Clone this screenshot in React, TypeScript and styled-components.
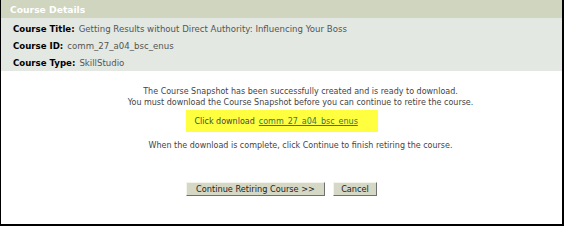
import React from "react";
import styled, { createGlobalStyle } from "styled-components";

const GlobalStyle = createGlobalStyle`
  html, body {
    margin: 0;
    padding: 0;
    background: #ffffff;
  }
  * {
    box-sizing: border-box;
  }
`;

const Frame = styled.div`
  width: 564px;
  height: 226px;
  border-left: 1px solid #000;
  border-right: 2px solid #000;
  border-bottom: 2px solid #000;
  background: #ffffff;
  font-family: "DejaVu Sans", Verdana, sans-serif;
  font-size: 8px;
  display: flex;
  flex-direction: column;
`;

const Header = styled.div`
  height: 18px;
  background: #cfd5be;
  color: #ffffff;
  font-size: 9.2px;
  font-weight: bold;
  padding-left: 9px;
  display: flex;
  align-items: center;
`;

const InfoPanel = styled.div`
  height: 53px;
  background: #e3e8e2;
  padding: 2px 0 0 12px;
  font-size: 8.6px;
  display: flex;
  flex-direction: column;
`;

const InfoRow = styled.div`
  height: 17px;
  display: flex;
  align-items: center;
  gap: 4px;
`;

const Label = styled.span`
  font-weight: bold;
  color: #000;
`;

const Value = styled.span`
  color: #555;
`;

const Body = styled.div`
  flex: 1;
  display: flex;
  flex-direction: column;
  align-items: center;
  padding-top: 15px;
  color: #444;
`;

const Message = styled.p<{ $top?: number }>`
  margin: ${(p) => p.$top ?? 0}px 0 0;
  padding-left: 38px;
  line-height: 11px;
  text-align: center;
  white-space: nowrap;
`;

const Highlight = styled.div`
  margin-top: 2px;
  height: 22px;
  width: 192px;
  padding-left: 9px;
  background: #ffff40;
  color: #444;
  display: flex;
  align-items: center;
  gap: 4px;
`;

const DownloadLink = styled.a`
  color: #2b7a52;
  text-decoration: underline;
  cursor: pointer;
`;

const Actions = styled.div`
  margin-top: 31px;
  display: flex;
  gap: 8px;
`;

const Button = styled.button<{ $width: number }>`
  width: ${(p) => p.$width}px;
  height: 14px;
  padding: 0;
  font-family: inherit;
  font-size: 8.2px;
  color: #222;
  background: #d6d8c6;
  border: 1px solid;
  border-color: #f4f4ec #707070 #707070 #f4f4ec;
  line-height: 12px;
`;

export default function App() {
  return (
    <>
      <GlobalStyle />
      <Frame>
        <Header>Course Details</Header>
        <InfoPanel>
          <InfoRow>
            <Label>Course Title:</Label>
            <Value>Getting Results without Direct Authority: Influencing Your Boss</Value>
          </InfoRow>
          <InfoRow>
            <Label>Course ID:</Label>
            <Value>comm_27_a04_bsc_enus</Value>
          </InfoRow>
          <InfoRow>
            <Label>Course Type:</Label>
            <Value>SkillStudio</Value>
          </InfoRow>
        </InfoPanel>
        <Body>
          <Message>
            The Course Snapshot has been successfully created and is ready to download.
          </Message>
          <Message>
            You must download the Course Snapshot before you can continue to retire the course.
          </Message>
          <Highlight>
            Click download <DownloadLink>comm_27_a04_bsc_enus</DownloadLink>
          </Highlight>
          <Message $top={8}>
            When the download is complete, click Continue to finish retiring the course.
          </Message>
          <Actions>
            <Button $width={139}>Continue Retiring Course &gt;&gt;</Button>
            <Button $width={44}>Cancel</Button>
          </Actions>
        </Body>
      </Frame>
    </>
  );
}
